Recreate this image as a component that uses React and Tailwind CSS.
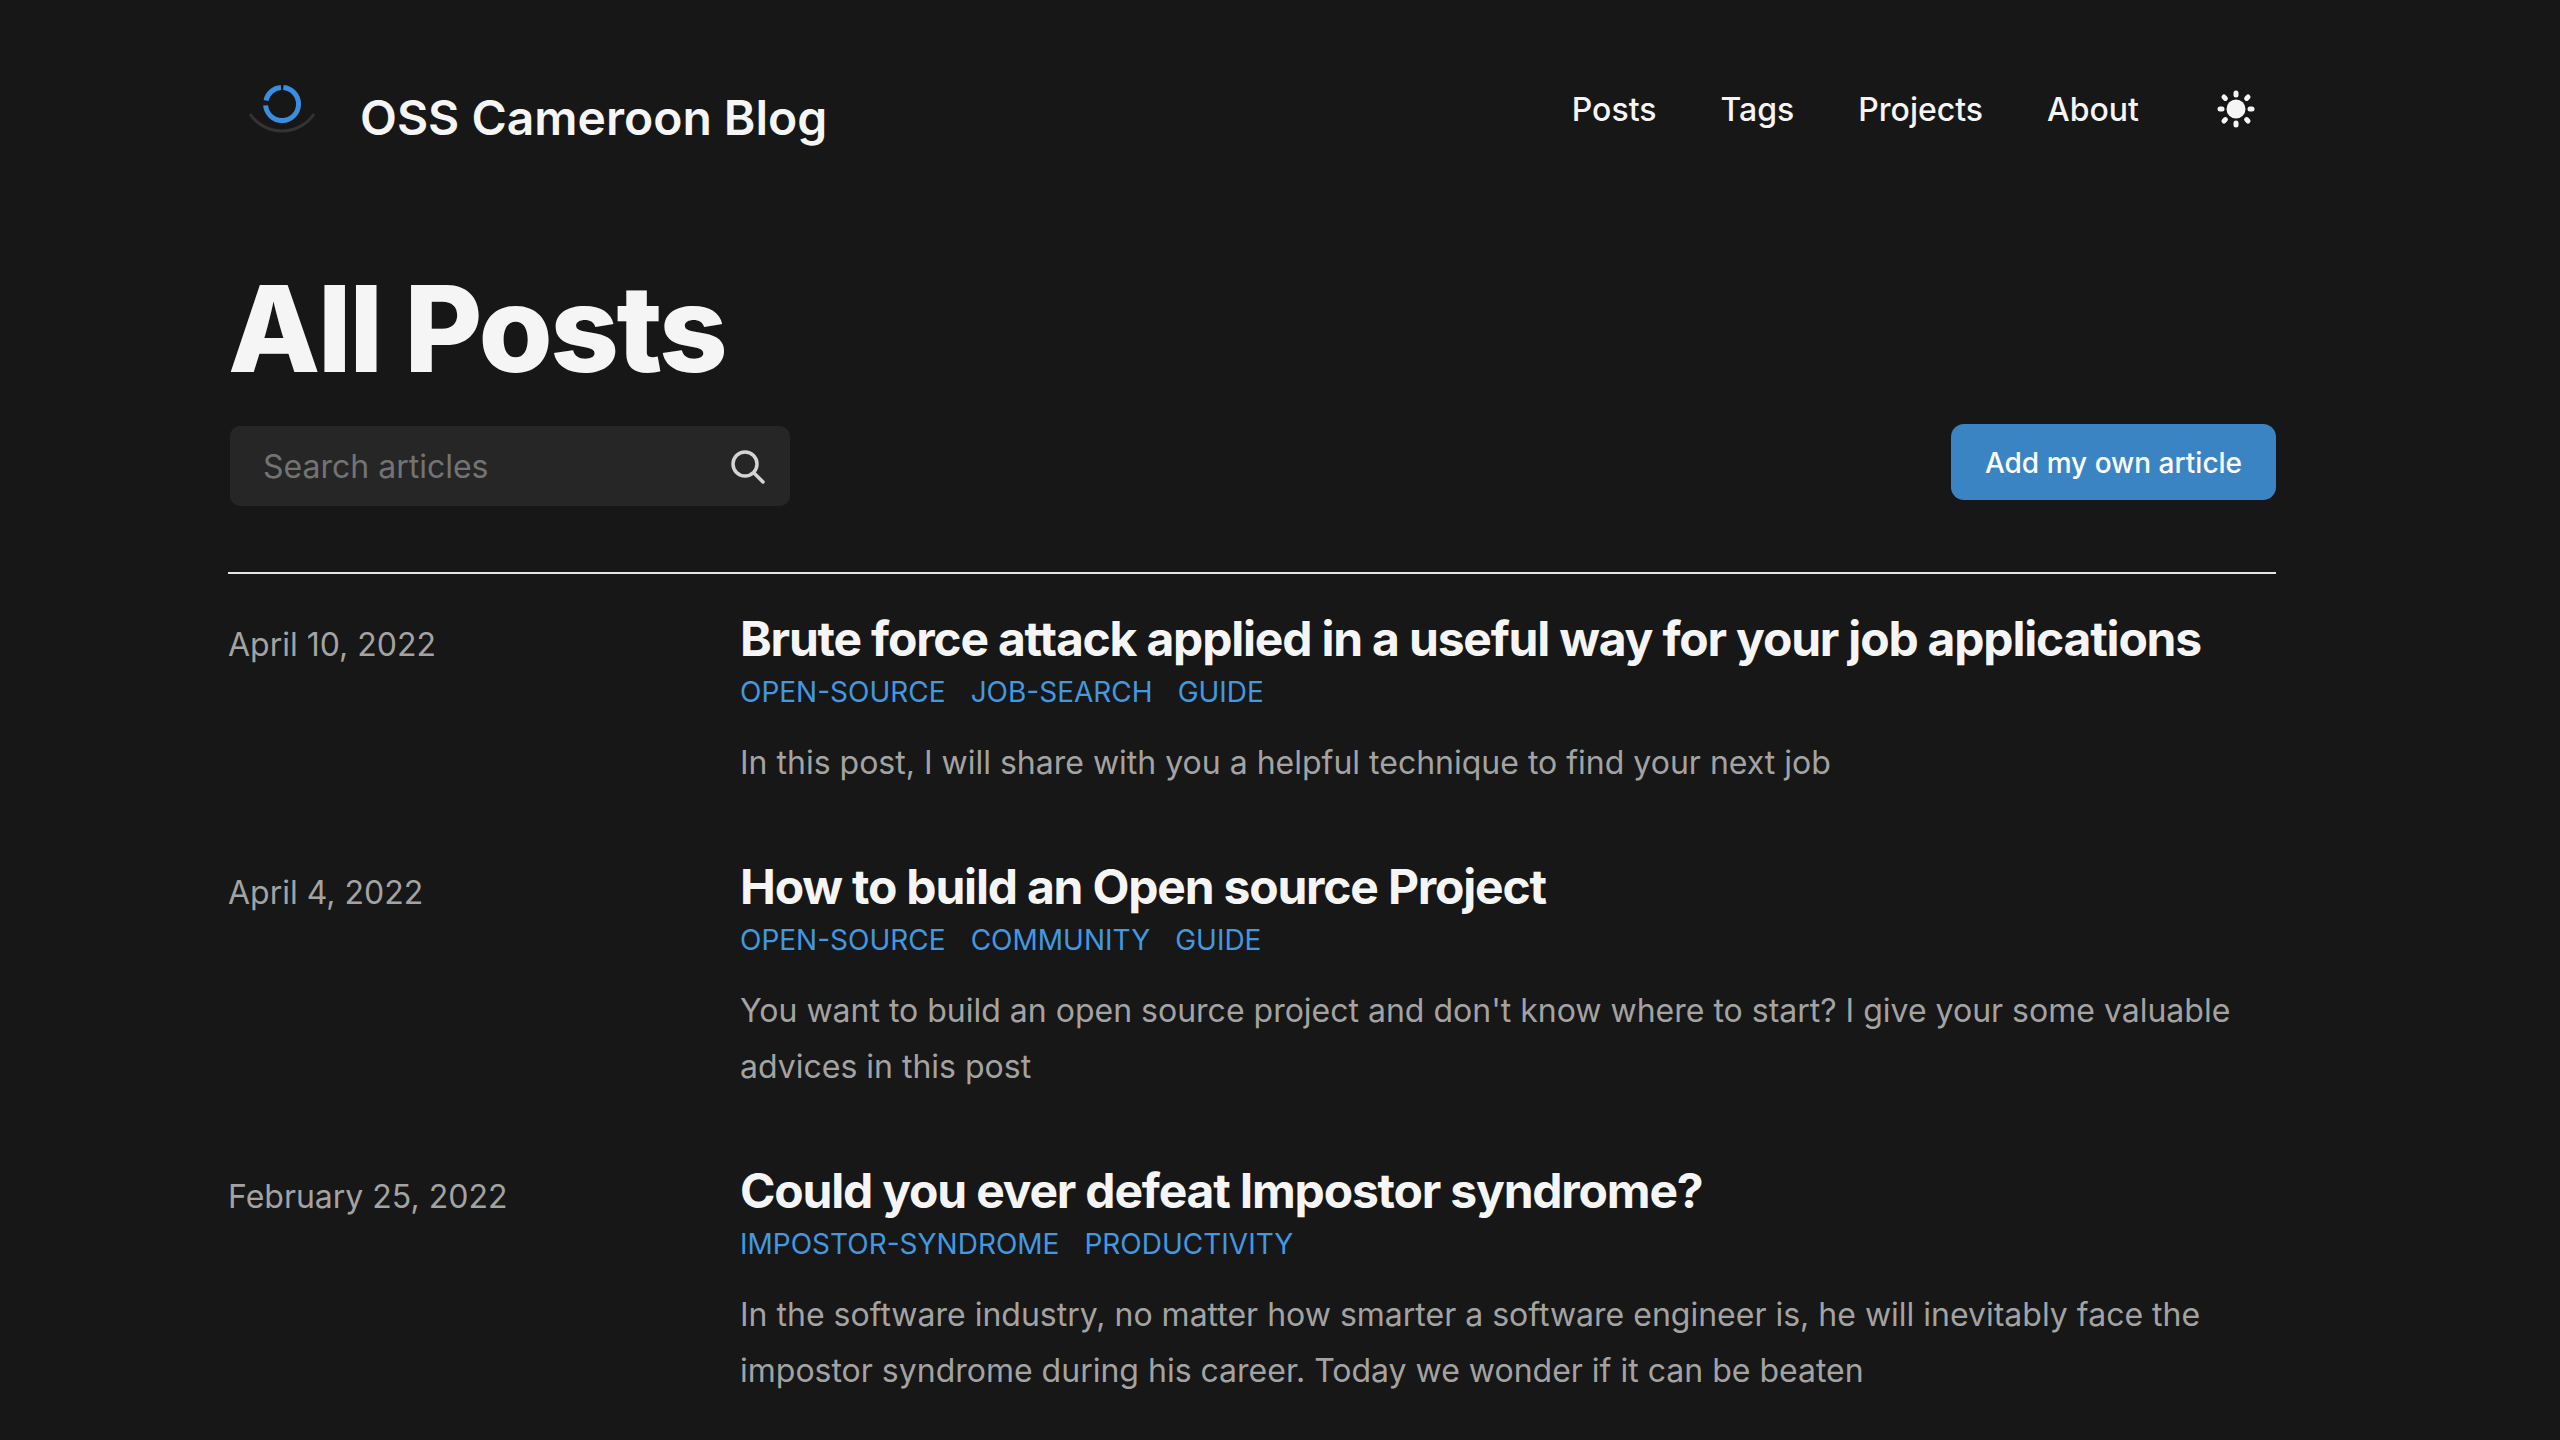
import React from 'react';

const NAV = ['Posts', 'Tags', 'Projects', 'About'];

const POSTS = [
  {
    date: 'April 10, 2022',
    title: 'Brute force attack applied in a useful way for your job applications',
    tags: ['OPEN-SOURCE', 'JOB-SEARCH', 'GUIDE'],
    summary: 'In this post, I will share with you a helpful technique to find your next job',
  },
  {
    date: 'April 4, 2022',
    title: 'How to build an Open source Project',
    tags: ['OPEN-SOURCE', 'COMMUNITY', 'GUIDE'],
    summary: "You want to build an open source project and don't know where to start? I give your some valuable advices in this post",
  },
  {
    date: 'February 25, 2022',
    title: 'Could you ever defeat Impostor syndrome?',
    tags: ['IMPOSTOR-SYNDROME', 'PRODUCTIVITY'],
    summary: 'In the software industry, no matter how smarter a software engineer is, he will inevitably face the impostor syndrome during his career. Today we wonder if it can be beaten',
  },
];

const Logo = () => (
  <svg width="72" height="56" viewBox="0 0 72 56" fill="none" className="mb-[16px]">
    <path d="M4 33 A38.6 38.6 0 0 0 68 33" stroke="#333333" strokeWidth="3" />
    <path d="M37.4 6.6 A16.5 16.5 0 1 1 19.6 24.4" stroke="#3a8ee0" strokeWidth="5" />
    <path d="M20 19.5 A16.5 16.5 0 0 1 35 6.5" stroke="#3a8ee0" strokeWidth="5" />
  </svg>
);

const Sun = () => (
  <svg width="40" height="40" viewBox="0 0 40 40" fill="#f5f5f5">
    <circle cx="20" cy="20" r="9.5" />
    <rect x="17.5" y="1.5" width="5" height="7" rx="2.5" />
    <rect x="17.5" y="31.5" width="5" height="7" rx="2.5" />
    <rect x="1.5" y="17.5" width="7" height="5" rx="2.5" />
    <rect x="31.5" y="17.5" width="7" height="5" rx="2.5" />
    <rect x="17.5" y="0.5" width="5" height="7" rx="2.5" transform="rotate(45 20 20)" />
    <rect x="17.5" y="32.5" width="5" height="7" rx="2.5" transform="rotate(45 20 20)" />
    <rect x="17.5" y="0.5" width="5" height="7" rx="2.5" transform="rotate(-45 20 20)" />
    <rect x="17.5" y="32.5" width="5" height="7" rx="2.5" transform="rotate(-45 20 20)" />
  </svg>
);

const SearchIcon = () => (
  <svg width="34" height="34" viewBox="0 0 34 34" fill="none" stroke="#d4d4d4" strokeWidth="3.5" strokeLinecap="round">
    <circle cx="14" cy="14" r="12" />
    <path d="M23 23 L32 32" />
  </svg>
);

const Post = ({ post }) => (
  <div className="flex">
    <div className="w-[512px] shrink-0 pt-[13px] text-[32px] leading-[52px] text-[#a3a3a3]">{post.date}</div>
    <div className="flex-1">
      <h2 className="text-[48px] leading-[66px] font-bold tracking-[-1.2px] text-[#f5f5f5]">{post.title}</h2>
      <div className="flex gap-[25px] text-[28px] leading-[40px] text-[#4299e1]">
        {post.tags.map(t => <span key={t}>{t}</span>)}
      </div>
      <p className="mt-[23px] text-[32px] leading-[56px] text-[#a3a3a3]">{post.summary}</p>
    </div>
  </div>
);

export default function App() {
  return (
    <div className="h-[1440px] overflow-hidden bg-[#171717] pl-[228px] font-['Inter',sans-serif] text-white">
      <div className="w-[2048px]">
        <header className="flex items-start justify-between pt-[80px]">
          <div className="flex items-center gap-[42px] pl-[18px]">
            <Logo />
            <span className="pt-[2px] text-[48px] leading-[72px] font-semibold text-[#f5f5f5]">OSS Cameroon Blog</span>
          </div>
          <nav className="flex items-center gap-[64px] pr-[20px] text-[32px] leading-[56px] font-medium text-[#f5f5f5]">
            {NAV.map(n => <a key={n} className="pt-[2px]">{n}</a>)}
            <span className="ml-[13px]"><Sun /></span>
          </nav>
        </header>

        <h1 className="mt-[110px] text-[120px] leading-[130px] font-extrabold tracking-[-2.6px] text-[#f5f5f5]">All Posts</h1>

        <div className="mt-[30px] flex items-start justify-between border-b-2 border-[#e5e5e5] pb-[66px]">
          <div className="ml-[2px] mt-[2px] flex h-[80px] w-[560px] items-center justify-between rounded-[10px] bg-[#262626] pl-[33px] pr-[25px] pt-[2px]">
            <span className="text-[32px] text-[#737373]">Search articles</span>
            <SearchIcon />
          </div>
          <button className="h-[76px] w-[325px] rounded-[13px] bg-[#3a84c4] pt-[2px] text-[28px] font-medium text-white">Add my own article</button>
        </div>

        <div className="mt-[32px] flex flex-col gap-[63px]">
          {POSTS.map(p => <Post key={p.title} post={p} />)}
        </div>
      </div>
    </div>
  );
}
